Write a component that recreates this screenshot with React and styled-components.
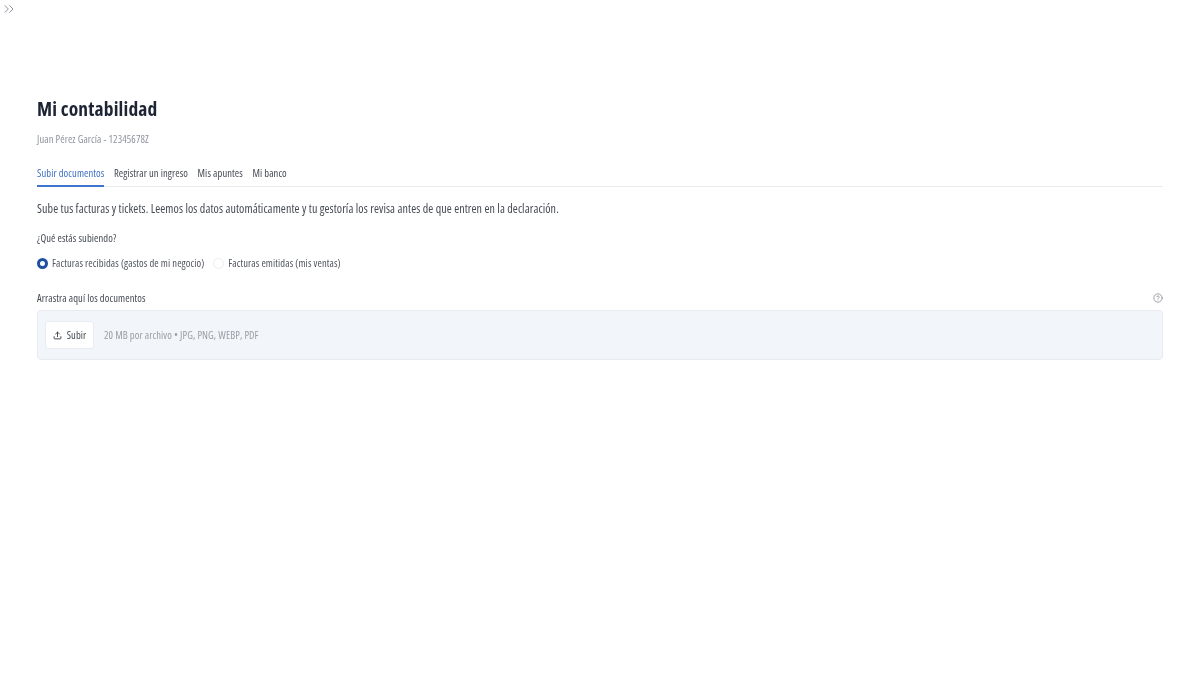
import React, { useState } from 'react';
import styled, { createGlobalStyle } from 'styled-components';
import { ChevronsRight, Upload, CircleHelp } from 'lucide-react';

const Global = createGlobalStyle`
    html, body {
        margin: 0;
        background: #fff;
        font-family: "Open Sans", "Liberation Sans", sans-serif;
        font-stretch: 75%;
        font-size: 10.5px;
        letter-spacing: 0.1px;
    }
`

const Page = styled.div`
    width: 1200px;
    height: 675px;
    overflow: hidden;
    filter: blur(0.3px);
`

const Collapse = styled.button`
    display: flex;
    border: 0;
    background: none;
    padding: 1px 0 0 1px;
    color: #858b94;
    height: 18px;
`

const Main = styled.main`
    padding: 78px 37px 0;
`

const Title = styled.h1`
    margin: 0;
    font-size: 19.5px;
    line-height: 26px;
    font-weight: 700;
    letter-spacing: 0.15px;
    color: #1d2433;
`

const Sub = styled.div`
    margin-top: 11px;
    line-height: 12px;
    color: #8f949c;
`

const Tabs = styled.nav`
    display: flex;
    gap: 9.5px;
    margin-top: 21px;
    border-bottom: 1px solid #e9ebef;
`

const Tab = styled.a`
    padding-bottom: 5px;
    line-height: 14px;
    color: ${p => (p.$active ? '#3f6fc4' : '#454a53')};
    border-bottom: 2px solid ${p => (p.$active ? '#3f74cc' : 'transparent')};
    margin-bottom: -1px;
`

const Intro = styled.p`
    margin: 14px 0 0;
    font-size: 12px;
    line-height: 16px;
    color: #454a53;
`

const Label = styled.div`
    margin-top: 15px;
    line-height: 12px;
    color: #454a53;
`

const Radios = styled.div`
    display: flex;
    gap: 9px;
    margin-top: 13px;
`

const RadioRow = styled.label`
    display: flex;
    align-items: center;
    gap: 4px;
    line-height: 12px;
    color: #50555e;
`

const Dot = styled.span`
    width: 11px;
    height: 11px;
    box-sizing: border-box;
    border-radius: 50%;
    background: #fff;
    border: ${p => (p.$on ? '3.5px solid #1f4fa3' : '1px solid #e9ebef')};
`

const DropHead = styled.div`
    display: flex;
    justify-content: space-between;
    align-items: center;
    margin-top: 23px;
    color: #7f848b;
`

const DropLabel = styled.span`
    line-height: 12px;
    color: #454a53;
`

const Drop = styled.div`
    display: flex;
    align-items: center;
    gap: 10px;
    margin-top: 6px;
    height: 50px;
    box-sizing: border-box;
    padding: 0 7px;
    background: #f2f5fa;
    border: 1px solid #e8ecf2;
    border-radius: 4px;
`

const UploadBtn = styled.button`
    display: flex;
    align-items: center;
    gap: 5px;
    height: 28px;
    width: 49px;
    box-sizing: border-box;
    justify-content: center;
    padding: 0;
    background: #fff;
    border: 1px solid #e8ecf2;
    border-radius: 3px;
    font-family: inherit;
    font-stretch: inherit;
    font-size: inherit;
    letter-spacing: inherit;
    color: #454a53;
`

const Hint = styled.span`
    color: #999da4;
`

const tabs = ['Subir documentos', 'Registrar un ingreso', 'Mis apuntes', 'Mi banco'];

export default function App() {
    const [active] = useState(0);

    return (
        <Page>
            <Global />
            <Collapse aria-label="Abrir menú">
                <ChevronsRight size={16} strokeWidth={1.4} />
            </Collapse>
            <Main>
                <Title>Mi contabilidad</Title>
                <Sub>Juan Pérez García - 12345678Z</Sub>
                <Tabs>
                    {tabs.map((t, i) => (
                        <Tab key={t} $active={i === active}>{t}</Tab>
                    ))}
                </Tabs>
                <Intro>Sube tus facturas y tickets. Leemos los datos automáticamente y tu gestoría los revisa antes de que entren en la declaración.</Intro>
                <Label>¿Qué estás subiendo?</Label>
                <Radios>
                    <RadioRow><Dot $on />Facturas recibidas (gastos de mi negocio)</RadioRow>
                    <RadioRow><Dot />Facturas emitidas (mis ventas)</RadioRow>
                </Radios>
                <DropHead>
                    <DropLabel>Arrastra aquí los documentos</DropLabel>
                    <CircleHelp size={10} strokeWidth={1.8} />
                </DropHead>
                <Drop>
                    <UploadBtn><Upload size={9} strokeWidth={2.6} />Subir</UploadBtn>
                    <Hint>20 MB por archivo • JPG, PNG, WEBP, PDF</Hint>
                </Drop>
            </Main>
        </Page>
    );
}
